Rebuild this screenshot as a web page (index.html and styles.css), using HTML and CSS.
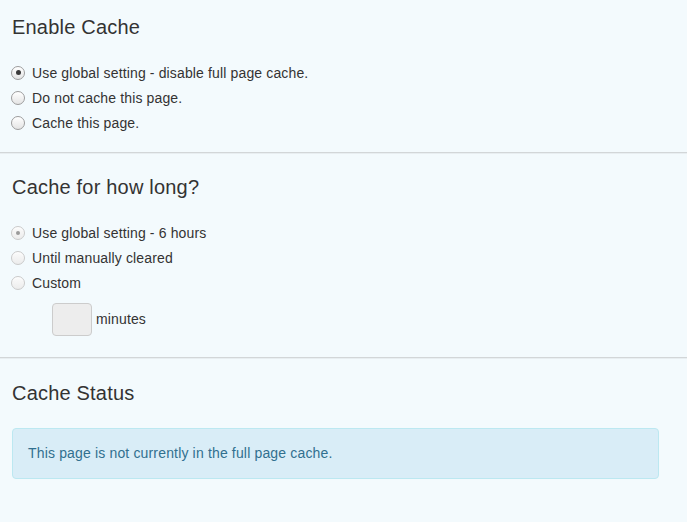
FILE: index.html
```html
<!DOCTYPE html>
<html>
<head>
<meta charset="utf-8">
<link rel="stylesheet" href="styles.css">
</head>
<body>
<section class="section first">
  <h2 class="heading">Enable Cache</h2>
  <div class="options">
    <label class="option"><span class="radio checked"></span>Use global setting - disable full page cache.</label>
    <label class="option"><span class="radio"></span>Do not cache this page.</label>
    <label class="option"><span class="radio"></span>Cache this page.</label>
  </div>
</section>
<div class="divider"></div>
<section class="section second">
  <h2 class="heading">Cache for how long?</h2>
  <div class="options">
    <label class="option"><span class="radio light checked"></span>Use global setting - 6 hours</label>
    <label class="option"><span class="radio light"></span>Until manually cleared</label>
    <label class="option"><span class="radio light"></span>Custom</label>
  </div>
  <div class="custom-row">
    <span class="minutes-box"></span><span class="minutes-label">minutes</span>
  </div>
</section>
<div class="divider"></div>
<section class="section third">
  <h2 class="heading">Cache Status</h2>
  <div class="alert">This page is not currently in the full page cache.</div>
</section>
</body>
</html>
```

FILE: styles.css
```css
html, body {
  margin: 0;
  padding: 0;
  background: #f3fafd;
  font-family: "Liberation Sans", Arial, sans-serif;
  color: #333;
}
body {
  width: 687px;
  height: 522px;
  overflow: hidden;
}
.section {
  padding: 0 12px;
}
.first {
  padding-top: 15px;
  padding-bottom: 17px;
}
.second {
  padding-top: 21px;
  padding-bottom: 21px;
}
.third {
  padding-top: 22px;
}
.heading {
  margin: 0;
  font-size: 20px;
  letter-spacing: 0.2px;
  line-height: 24px;
  font-weight: normal;
  color: #333;
}
.options {
  margin-top: 21px;
  display: flex;
  flex-direction: column;
}
.option {
  display: flex;
  align-items: center;
  height: 25px;
  font-size: 14px;
  letter-spacing: 0.14px;
  color: #333;
  gap: 7px;
}
.radio {
  box-sizing: border-box;
  width: 14px;
  height: 14px;
  margin-left: -1px;
  border-radius: 50%;
  border: 1px solid #9c9c9c;
  background: linear-gradient(#ffffff, #e4e4e4);
  box-shadow: inset 0 1px 1px rgba(255,255,255,0.8);
  display: flex;
  align-items: center;
  justify-content: center;
}
.radio.checked::after {
  content: "";
  width: 5px;
  height: 5px;
  border-radius: 50%;
  background: #3a3a3a;
}
.radio.light {
  border-color: #cacaca;
  background: linear-gradient(#fbfbfb, #ececec);
}
.radio.light.checked::after {
  background: #9a9a9a;
  width: 4px;
  height: 4px;
}
.custom-row {
  margin-top: 8px;
  padding-left: 40px;
  display: flex;
  align-items: center;
  gap: 4px;
}
.minutes-box {
  box-sizing: border-box;
  width: 40px;
  height: 33px;
  border: 1px solid #cccccc;
  border-radius: 4px;
  background: #ededed;
}
.minutes-label {
  font-size: 14px;
  letter-spacing: 0.14px;
  color: #333;
  margin-top: -1px;
}
.divider {
  height: 1px;
  background: #d2d6d8;
  border-bottom: 1px solid #e8eef1;
}
.alert {
  margin-top: 23px;
  width: 647px;
  box-sizing: border-box;
  padding: 15px;
  border: 1px solid #bce8f1;
  border-radius: 4px;
  background: #d9edf7;
  color: #31708f;
  font-size: 14px;
  letter-spacing: 0.16px;
  line-height: 19px;
}
```
